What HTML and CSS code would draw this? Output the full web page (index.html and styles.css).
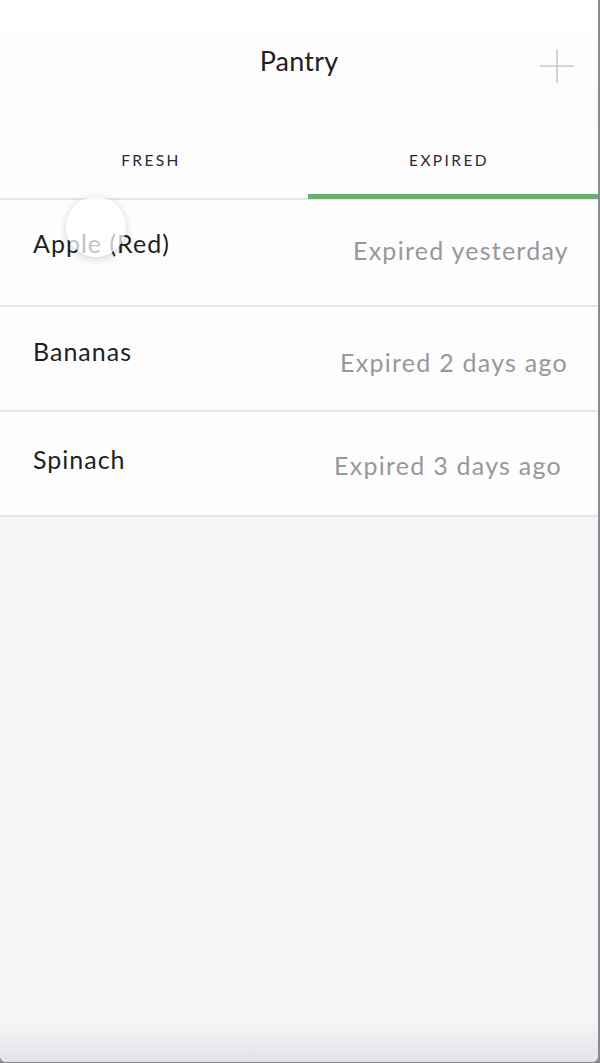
FILE: index.html
```html
<!DOCTYPE html>
<html>
<head>
<meta charset="utf-8">
<link rel="stylesheet" href="styles.css">
</head>
<body>
<div class="screen">
  <header class="topbar">
    <div class="title">Pantry</div>
    <svg class="add" width="36" height="36" viewBox="0 0 36 36"><path d="M18 1V35M1 18H35" stroke="#c9c9cc" stroke-width="1.6" fill="none"/></svg>
  </header>
  <nav class="tabs">
    <div class="tab fresh">FRESH</div>
    <div class="tab active">EXPIRED</div>
  </nav>
  <ul class="list">
    <li class="row r1"><span class="name">Apple (Red)</span><span class="when">Expired yesterday</span></li>
    <li class="row r2"><span class="name">Bananas</span><span class="when">Expired 2 days ago</span></li>
    <li class="row r3"><span class="name">Spinach</span><span class="when">Expired 3 days ago</span></li>
  </ul>
  <div class="empty"></div>
  <div class="touch"></div>
</div>
</body>
</html>
```
FILE: styles.css
```css
* { box-sizing: border-box; }
html, body { margin: 0; padding: 0; }
body {
  width: 600px;
  height: 1063px;
  overflow: hidden;
  background: #8a8a8e;
  font-family: Lato, "Open Sans", sans-serif;
}
.screen {
  position: relative;
  width: 598px;
  height: 1062px;
  display: flex;
  flex-direction: column;
  background: #f4f3f6;
  border-radius: 0 0 6px 6px;
  overflow: hidden;
}
.topbar {
  position: relative;
  height: 124px;
  background: linear-gradient(#ffffff, #fcfcfd);
  display: flex;
  justify-content: center;
  padding-top: 44px;
}
.title {
  font-size: 27px;
  color: #1f1f22;
  line-height: 34px;
  letter-spacing: 0.2px;
}
.add {
  position: absolute;
  right: 23px;
  top: 48px;
}
.tabs {
  display: flex;
  height: 76px;
  background: #fdfdfe;
  border-bottom: 2px solid #e6e6e9;
}
.tab {
  display: flex;
  justify-content: center;
  padding-top: 26px;
  font-size: 15.5px;
  letter-spacing: 2.4px;
  color: #2b2b2e;
  line-height: 20px;
}
.tab.fresh { width: 300px; padding-left: 2px; }
.tab.active {
  flex: 1;
  margin-left: 8px;
  padding-right: 8px;
  border-bottom: 5px solid #6aae74;
  margin-bottom: -1px;
}
.list {
  list-style: none;
  margin: 0;
  padding: 0;
  background: #fdfdfe;
}
.row {
  height: 105px;
  border-bottom: 2px solid #e6e6e9;
  display: flex;
  justify-content: space-between;
  padding: 0 29px 0 33px;
  font-size: 25px;
  line-height: 30px;
  letter-spacing: 1px;
}
.name { color: #1f1f22; }
.when { color: #98979b; letter-spacing: 1.25px; }
.r1 { height: 107px; }
.r1 .name { margin-top: 28px; }
.r1 .when { margin-top: 35px; }
.r2 .name { margin-top: 29px; }
.r2 .when { margin-top: 40px; padding-right: 1px; }
.r3 .name { margin-top: 32px; }
.r3 .when { margin-top: 38px; padding-right: 7px; }
.empty {
  flex: 1;
  background: linear-gradient(#f5f4f7 0, #f5f4f7 calc(100% - 40px), #e3e2e6 100%);
}
.touch {
  position: absolute;
  left: 66px;
  top: 197px;
  width: 60px;
  height: 60px;
  border-radius: 50%;
  background: rgba(255,255,255,0.72);
  box-shadow: 0 2px 8px rgba(0,0,0,0.18);
}
```
